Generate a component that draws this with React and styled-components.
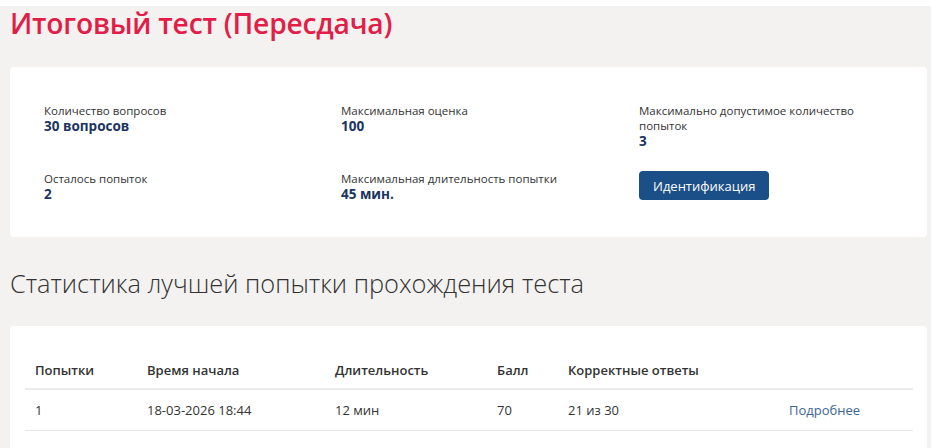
import React from "react";
import styled, { createGlobalStyle } from "styled-components";

const Global = createGlobalStyle`
  html, body {
    margin: 0;
    background: #ffffff;
    font-family: "Open Sans", "Noto Sans", sans-serif;
    color: #333;
  }
`;

const Page = styled.div`
  margin-top: 6px;
  width: 931px;
  min-height: 442px;
  box-sizing: border-box;
  background: #f3f2f0;
  padding: 0 4px 0 10px;
`;

const Title = styled.h1`
  margin: 0;
  font-size: 28.2px;
  line-height: 34px;
  font-weight: 600;
  color: #e11d48;
  letter-spacing: -0.2px;
`;

const Card = styled.div`
  background: #fff;
  border-radius: 4px;
  margin-top: ${(p) => p.$top}px;
  padding: ${(p) => p.$pad};
`;

const InfoGrid = styled.div`
  display: grid;
  grid-template-columns: 297px 298px 1fr;
  row-gap: 21px;
`;

const Item = styled.div`
  display: flex;
  flex-direction: column;
  padding-right: 20px;
`;

const Label = styled.span`
  font-size: 11.5px;
  line-height: 15px;
  color: #333;
`;

const Value = styled.span`
  font-size: 13.5px;
  line-height: 17px;
  font-weight: 700;
  color: #1a3560;
`;

const Button = styled.button`
  align-self: flex-start;
  height: 29px;
  padding: 0 14px;
  border: none;
  border-radius: 4px;
  background: #1b4f87;
  color: #fff;
  font-family: inherit;
  font-size: 13px;
  font-weight: 500;
`;

const Subtitle = styled.h2`
  margin: 30px 0 0;
  font-size: 25.4px;
  line-height: 32px;
  font-weight: 300;
  color: #333;
`;

const Table = styled.table`
  width: 100%;
  border-collapse: collapse;
  table-layout: fixed;
  font-size: 13px;
`;

const Th = styled.th`
  box-sizing: border-box;
  text-align: left;
  font-weight: 600;
  color: #333;
  height: 38px;
  padding: 0 10px;
  border-bottom: 2px solid #ececec;
  vertical-align: middle;
  width: ${(p) => p.$w || "auto"};
`;

const Td = styled.td`
  height: 40px;
  padding: 0 10px;
  border-bottom: 1px solid #e8e8e8;
  color: #333;
`;

const Link = styled.a`
  color: #3b6597;
  text-decoration: none;
`;

const info = [
  { label: "Количество вопросов", value: "30 вопросов" },
  { label: "Максимальная оценка", value: "100" },
  { label: "Максимально допустимое количество попыток", value: "3" },
  { label: "Осталось попыток", value: "2" },
  { label: "Максимальная длительность попытки", value: "45 мин." },
];

export default function App() {
  return (
    <>
      <Global />
      <Page>
        <Title>Итоговый тест (Пересдача)</Title>
        <Card $top={27} $pad="36px 34px 34px 34px">
          <InfoGrid>
            {info.map((it) => (
              <Item key={it.label}>
                <Label>{it.label}</Label>
                <Value>{it.value}</Value>
              </Item>
            ))}
            <Item>
              <Button>Идентификация</Button>
            </Item>
          </InfoGrid>
        </Card>
        <Subtitle>Статистика лучшей попытки прохождения теста</Subtitle>
        <Card $top={27} $pad="25px 14px 20px 15px">
          <Table>
            <thead>
              <tr>
                <Th $w="112px">Попытки</Th>
                <Th $w="188px">Время начала</Th>
                <Th $w="162px">Длительность</Th>
                <Th $w="71px">Балл</Th>
                <Th $w="221px">Корректные ответы</Th>
                <Th />
              </tr>
            </thead>
            <tbody>
              <tr>
                <Td>1</Td>
                <Td>18-03-2026 18:44</Td>
                <Td>12 мин</Td>
                <Td>70</Td>
                <Td>21 из 30</Td>
                <Td>
                  <Link href="#">Подробнее</Link>
                </Td>
              </tr>
            </tbody>
          </Table>
        </Card>
      </Page>
    </>
  );
}
